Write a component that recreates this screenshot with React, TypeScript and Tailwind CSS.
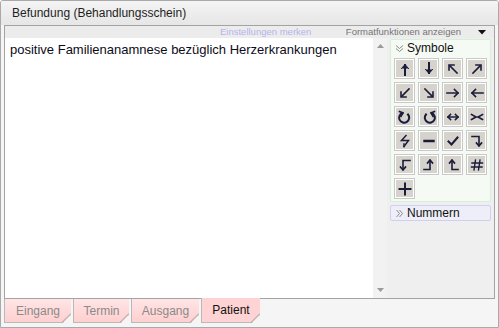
import type { ReactNode } from 'react';

const FONT = { fontFamily: '"Liberation Sans", Arial, sans-serif' };

// simple stroke icons for the symbol palette
const ic = (children: ReactNode) => (
  <svg width="14" height="14" viewBox="0 0 14 14" fill="none" stroke="#1b1b3a" strokeWidth="2" strokeLinecap="square">
    {children}
  </svg>
);

const symbols: ReactNode[] = [
  ic(<><path d="M7 13V3" /><path d="M3.5 6.5L7 2.5l3.5 4" fill="#1b1b3a" strokeWidth="1" /></>),
  ic(<><path d="M7 1v10" /><path d="M3.5 7.5L7 11.5l3.5-4" fill="#1b1b3a" strokeWidth="1" /></>),
  ic(<><path d="M11 11L4 4" strokeWidth="1.6" /><path d="M3 8V3h5" strokeWidth="1.6" /></>),
  ic(<><path d="M3 11l7-7" strokeWidth="1.6" /><path d="M6 3h5v5" strokeWidth="1.6" /></>),
  ic(<><path d="M11 3L4 10" strokeWidth="1.6" /><path d="M3 6v5h5" strokeWidth="1.6" /></>),
  ic(<><path d="M3 3l7 7" strokeWidth="1.6" /><path d="M11 6v5H6" strokeWidth="1.6" /></>),
  ic(<><path d="M1 7h11" strokeWidth="1.6" /><path d="M8.5 3.5L12 7l-3.5 3.5" strokeWidth="1.6" /></>),
  ic(<><path d="M13 7H2" strokeWidth="1.6" /><path d="M5.5 3.5L2 7l3.5 3.5" strokeWidth="1.6" /></>),
  ic(<><path d="M10 4.5A5 5 0 1 1 4.5 3" /><path d="M1.5 1.5L5 3 3 6.5" strokeWidth="1.6" /></>),
  ic(<><path d="M4 4.5A5 5 0 1 0 9.5 3" /><path d="M12.5 1.5L9 3l2 3.5" strokeWidth="1.6" /></>),
  ic(<><path d="M2 7h10" strokeWidth="1.6" /><path d="M4.5 4.5L2 7l2.5 2.5M9.5 4.5L12 7l-2.5 2.5" strokeWidth="1.6" /></>),
  ic(<><path d="M1.5 4.5L6 7l-4.5 2.5M12.5 4.5L8 7l4.5 2.5M5 7h4" strokeWidth="1.6" /></>),
  ic(<><path d="M8 1.5L3.5 6.5h7L6 12.5" strokeWidth="1.5" /><path d="M6 12.5l0-2.5" strokeWidth="1.5" /></>),
  ic(<path d="M2.5 7h9" strokeWidth="2.4" />),
  ic(<path d="M2.5 7.5l3 3 6-7" strokeWidth="2" />),
  ic(<><path d="M2 2.5h7v9" strokeWidth="1.6" /><path d="M6.5 9L9 12l2.5-3" strokeWidth="1.6" /></>),
  ic(<><path d="M12 2.5H5v9" strokeWidth="1.6" /><path d="M2.5 9L5 12l2.5-3" strokeWidth="1.6" /></>),
  ic(<><path d="M2 11.5h6v-9" strokeWidth="1.6" /><path d="M5.5 5L8 2l2.5 3" strokeWidth="1.6" /></>),
  ic(<><path d="M12 11.5H6v-9" strokeWidth="1.6" /><path d="M3.5 5L6 2l2.5 3" strokeWidth="1.6" /></>),
  ic(<path d="M5.5 2L4 12M10 2l-1.5 10M2 5h10.5M1.5 9H12" strokeWidth="1.4" />),
  ic(<path d="M7 1.5v11M1.5 7h11" strokeWidth="2" />),
];

function Chevrons({ dir, color }: { dir: 'down' | 'right'; color: string }) {
  return (
    <svg width="9" height="9" viewBox="0 0 9 9" fill="none" stroke={color} strokeWidth="1">
      {dir === 'down' ? (
        <path d="M1 1.5l3.5 3 3.5-3M1 4.5l3.5 3 3.5-3" />
      ) : (
        <path d="M1.5 1l3 3.5-3 3.5M4.5 1l3 3.5-3 3.5" />
      )}
    </svg>
  );
}

const tabs = [
  { label: 'Eingang', w: 'w-[67px]', active: false },
  { label: 'Termin', w: 'w-[56px]', active: false },
  { label: 'Ausgang', w: 'w-[68px]', active: false },
  { label: 'Patient', w: 'w-[59px]', active: true },
];

export default function App() {
  return (
    <div
      className="flex h-[328px] w-[499px] flex-col overflow-hidden rounded-t-[3px] border border-[#a9a9a9] bg-[#f5f5f5] text-[#111]"
      style={FONT}
    >
      <div className="flex h-[24px] shrink-0 items-center bg-gradient-to-b from-[#f4f4f4] to-[#e6e6e6] pl-[11px] text-[12px] text-[#1e1e1e]">
        Befundung (Behandlungsschein)
      </div>

      <div className="mx-[3px] flex h-[274px] flex-col border border-[#a3a3a3] bg-[#efefef]">
        <div className="flex h-[12px] shrink-0 items-center whitespace-nowrap bg-[#ececec] text-[9.5px] leading-none">
          <span className="ml-[215px] text-[#b4b4ec]">Einstellungen merken</span>
          <span className="ml-auto text-[#747474]">Formatfunktionen anzeigen</span>
          <svg className="mr-[8px] ml-[17px]" width="8" height="5" viewBox="0 0 8 5">
            <path d="M0 0h8L4 4.5z" fill="#111" />
          </svg>
        </div>

        <div className="flex min-h-0 flex-1">
          <div className="flex-1 bg-white px-[5px] pt-[3px] text-[13px] leading-[18px] text-[#0b0b1a]">
            positive Familienanamnese bezüglich Herzerkrankungen
          </div>

          <div className="flex w-[14px] flex-col items-center justify-between bg-[#f2f2f2] py-[6px]">
            <svg width="7" height="4" viewBox="0 0 7 4"><path d="M0 4L3.5 0 7 4z" fill="#9a9a9a" /></svg>
            <svg width="7" height="4" viewBox="0 0 7 4"><path d="M0 0h7L3.5 4z" fill="#9a9a9a" /></svg>
          </div>

          <div className="flex w-[107px] flex-col gap-[3px] px-[3px] pt-[1px]">
            <div className="rounded-[2px] border border-[#d6f0d6] bg-[#f5fbf4] pb-[1px]">
              <div className="flex h-[16px] items-center gap-[3px] pl-[4px] text-[12px] text-[#111]">
                <Chevrons dir="down" color="#8a8a8a" />
                Symbole
              </div>
              <div className="grid grid-cols-4 gap-[3px] px-[3px] pt-[2px] pb-[1px]">
                {symbols.map((s, i) => (
                  <div
                    key={i}
                    className="flex h-[21px] w-[21px] items-center justify-center border border-[#c9c9c9] bg-[#d6d3cd] shadow-[inset_0_0_0_1px_#ffffff]"
                  >
                    {s}
                  </div>
                ))}
              </div>
            </div>
            <div className="flex h-[16px] items-center gap-[3px] rounded-[2px] border border-[#cfcff2] bg-[#eeeef8] pl-[4px] text-[12px] text-[#111]">
              <Chevrons dir="right" color="#8a8a8a" />
              Nummern
            </div>
          </div>
        </div>
      </div>

      <div className="flex h-[26px] items-start pl-[3px] text-[12px]">
        {tabs.map((t) => (
          <div
            key={t.label}
            className={`relative mr-[2px] flex items-center justify-center border-l border-b border-[#b9b9b9] ${t.w} ${
              t.active
                ? '-mt-px h-[25px] bg-[#ffd3d3] text-[#111]'
                : 'h-[24px] bg-gradient-to-b from-[#ffe5e5] to-[#ffcfcf] text-[#8a8a8a]'
            }`}
            style={{ clipPath: 'polygon(0 0, 100% 0, 100% calc(100% - 8px), calc(100% - 8px) 100%, 0 100%)' }}
          >
            {t.label}
            <svg className="absolute right-0 bottom-0" width="9" height="9" viewBox="0 0 9 9">
              <path d="M9 0V0.5L0.5 9H0" stroke="#9a9a9a" strokeWidth="1" fill="none" />
              <path d="M8.5 0v8.5" stroke="#c8c8c8" strokeWidth="1" />
            </svg>
          </div>
        ))}
      </div>
    </div>
  );
}
